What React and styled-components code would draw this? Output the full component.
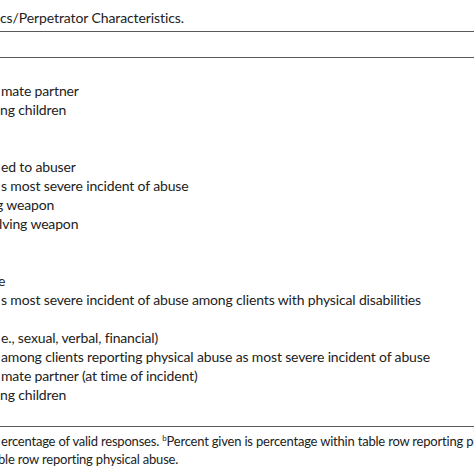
import React from "react";
import styled, { createGlobalStyle } from "styled-components";

const Global = createGlobalStyle`
  html, body { margin: 0; padding: 0; background: #fff; }
  body { width: 474px; height: 474px; overflow: hidden; }
`;

const Page = styled.div`
  width: 474px;
  height: 474px;
  overflow: hidden;
  font-family: "Lato", "Open Sans", sans-serif;
  color: #222;
  padding-top: 8px;
  box-sizing: border-box;
`;

const Caption = styled.div`
  font-size: 14px;
  line-height: 19px;
  letter-spacing: -0.1px;
  white-space: nowrap;
  margin-bottom: 4px;
`;

const Rule = styled.div`
  height: 0;
  border-top: 1.6px solid #5a5a5a;
`;

const HeaderRow = styled.div`
  height: 25px;
`;

const Body = styled.div`
  display: flex;
  flex-direction: column;
  padding: 23px 0 22px;
`;

const Row = styled.div`
  font-size: 14px;
  line-height: 19px;
  height: 19px;
  letter-spacing: -0.15px;
  white-space: nowrap;
  text-indent: ${(p) => p.$shift || 0}px;
`;

const Notes = styled.div`
  padding-top: 5px;
`;

const Note = styled.div`
  font-size: 13px;
  line-height: 18px;
  letter-spacing: -0.2px;
  white-space: nowrap;
  text-indent: ${(p) => p.$shift || 0}px;
`;

const Sup = styled.sup`
  font-size: 8px;
  line-height: 0;
  vertical-align: 5px;
`;

const rows = [
  { t: "mate partner", s: 1 },
  { t: "ng children", s: 0 },
  { t: "" },
  { t: "" },
  { t: "ed to abuser", s: 1 },
  { t: "s most severe incident of abuse", s: 1 },
  { t: "g weapon", s: -4 },
  { t: "lving weapon", s: -1 },
  { t: "" },
  { t: "" },
  { t: "e", s: -2 },
  { t: "s most severe incident of abuse among clients with physical disabilities", s: 1 },
  { t: "" },
  { t: "e., sexual, verbal, financial)", s: 1 },
  { t: "among clients reporting physical abuse as most severe incident of abuse", s: 1 },
  { t: "mate partner (at time of incident)", s: 1 },
  { t: "ng children", s: 0 },
];

export default function App() {
  return (
    <>
      <Global />
      <Page>
        <Caption>cs/Perpetrator Characteristics.</Caption>
        <Rule />
        <HeaderRow />
        <Rule />
        <Body>
          {rows.map((r, i) => (
            <Row key={i} $shift={r.s}>{r.t || "\u00a0"}</Row>
          ))}
        </Body>
        <Rule />
        <Notes>
          <Note $shift={1}>
            ercentage of valid responses. <Sup>b</Sup>Percent given is percentage within table row reporting physical abuse.
          </Note>
          <Note $shift={-2}>ble row reporting physical abuse.</Note>
        </Notes>
      </Page>
    </>
  );
}
